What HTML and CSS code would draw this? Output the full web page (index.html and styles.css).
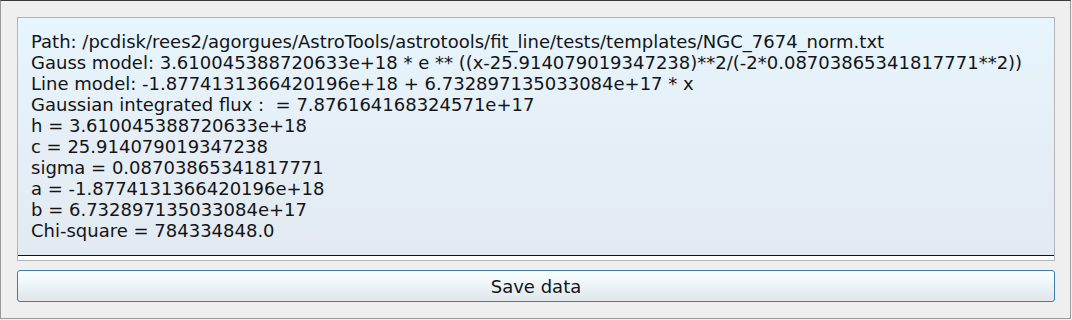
FILE: index.html
```html
<!DOCTYPE html>
<html>
<head>
<meta charset="utf-8">
<link rel="stylesheet" href="styles.css">
</head>
<body>
<div class="window">
  <div class="textbox">
    <div class="content">
      <div class="line">Path: /pcdisk/rees2/agorgues/AstroTools/astrotools/fit_line/tests/templates/NGC_7674_norm.txt</div>
      <div class="line">Gauss model: 3.610045388720633e+18 * e ** ((x-25.914079019347238)**2/(-2*0.08703865341817771**2))</div>
      <div class="line">Line model: -1.8774131366420196e+18 + 6.732897135033084e+17 * x</div>
      <div class="line">Gaussian integrated flux :&nbsp; = 7.876164168324571e+17</div>
      <div class="line">h = 3.610045388720633e+18</div>
      <div class="line">c = 25.914079019347238</div>
      <div class="line">sigma = 0.08703865341817771</div>
      <div class="line">a = -1.8774131366420196e+18</div>
      <div class="line">b = 6.732897135033084e+17</div>
      <div class="line">Chi-square = 784334848.0</div>
    </div>
  </div>
  <button class="btn">Save data</button>
</div>
</body>
</html>
```
FILE: styles.css
```css
html, body {
  margin: 0;
  padding: 0;
  background: #efefef;
}
.window {
  box-sizing: border-box;
  width: 1071px;
  height: 319px;
  border: 1px solid #9a9a9a;
  border-top-color: #3a3a3a;
  background: #efefef;
  padding: 16px 15px 16px 16px;
  display: flex;
  flex-direction: column;
  gap: 9px;
  font-family: "DejaVu Sans", sans-serif;
  font-size: 18px;
  color: #141414;
}
.textbox {
  box-sizing: border-box;
  height: 244px;
  border: 1px solid #b2b6ba;
  border-top-color: #a9b4bc;
  background: #ffffff;
  padding-bottom: 4px;
  display: flex;
  flex-direction: column;
}
.content {
  flex: 1;
  background: linear-gradient(to bottom, #e7f5fe 0%, #e5eef6 55%, #e3eaf1 100%);
  border-bottom: 1px solid #111;
  padding: 13px 13px 0 13px;
}
.line {
  line-height: 21px;
  white-space: nowrap;
}
.btn {
  box-sizing: border-box;
  height: 32px;
  width: 100%;
  border: 1px solid #3f7da6;
  border-radius: 3px;
  background: linear-gradient(to bottom, #fbfeff 0%, #eef6fa 40%, #e0e6ea 100%);
  font-family: "DejaVu Sans", sans-serif;
  font-size: 18px;
  color: #141414;
  padding: 0;
  margin: 0;
}
```
